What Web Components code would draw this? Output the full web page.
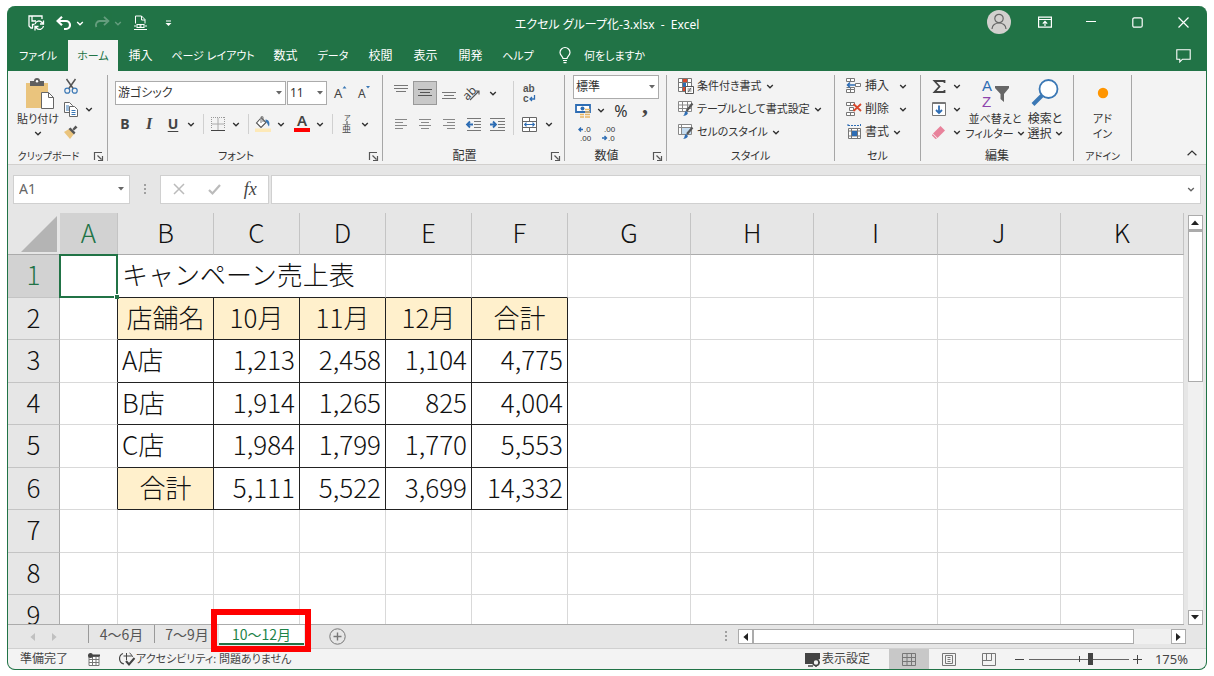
<!DOCTYPE html>
<html lang="ja">
<head>
<meta charset="utf-8">
<title>エクセル グループ化-3.xlsx - Excel</title>
<style>
  html, body { margin: 0; height: 100%; }
  body {
    box-sizing: border-box; padding: 6px 7px; background: #fff; color: #333;
    font: 12px/16px "Noto Sans", "Noto Sans CJK JP", sans-serif;
    font-feature-settings: "palt";
  }
</style>
</head>
<body>
<excel-window></excel-window>
<script>
const ICONS = {
  chevron: [8, 5, '<path d="M1.2 1l2.8 2.7L6.8 1" fill="none" stroke="currentColor" stroke-width="1.4"/>'],
  up: [10, 6, '<path d="M.6 5.3L5 1l4.4 4.3" fill="none" stroke="currentColor" stroke-width="1.2"/>'],
  triDown: [8, 5, '<path d="M0 0h8L4 4.6z" fill="currentColor"/>'],
  triSmall: [6, 4, '<path d="M0 0h6L3 3.600z" fill="currentColor"/>'],
  triUp: [8, 5, '<path d="M0 5h8L4 .4z" fill="currentColor"/>'],
  triLeft: [5, 8, '<path d="M5 0v8L.4 4z" fill="currentColor"/>'],
  triRight: [5, 8, '<path d="M0 0v8l4.6-4z" fill="currentColor"/>'],
  dots: [3, 11, '<path d="M0 0h2v2H0zM0 4h2v2H0zM0 8h2v2H0z" fill="#a0a0a0"/>'],
  save: [17, 16, '<g fill="none" stroke="#fff" stroke-width="1.3"><path d="M5 13H3L1 11V1h13v3M4 1v5h4M4.500 13V9.500h2"/><path d="M7 9a4 4 0 0 1 7-1.500l1 1.500M15.500 5.500v3.500H12M15.500 11a4 4 0 0 1-7 2L7.200 11.500M7 15.500v-4h3.500"/></g>'],
  undo: [16, 14, '<path d="M6 .8L1.600 5 6 9.200M2 5h8a4 4 0 0 1 0 8H8" fill="none" stroke="currentColor" stroke-width="2.200"/>'],
  redo: [16, 14, '<path d="M10 .8L14.400 5 10 9.200M14 5H6a4 4 0 0 0-3.600 6" fill="none" stroke="currentColor" stroke-width="1.800"/>'],
  preview: [13, 16, '<g fill="none" stroke="#fff"><path d="M1.500 8.500V1h6l3.500 3.500v4M7.500 1v4H11M0 14.500h13"/><path d="M3 9.500h7v3H3zM0 11h2M11 11h2" stroke-width="1.100"/><path d="M5.500 11h2" stroke-width="1.500"/></g>'],
  more: [7, 7, '<path d="M1 1h5" stroke="#fff"/><path d="M.500 3h6L3.500 6z" fill="#fff"/>'],
  person: [24, 24, '<circle cx="12" cy="12" r="12" fill="#d2d0ce"/><g fill="none" stroke="#666" stroke-width="1.200"><circle cx="12" cy="8.500" r="4.200"/><path d="M5 19c0-8 14-8 14 0"/></g>'],
  ribbonOpt: [14, 12, '<g fill="none" stroke="#fff" stroke-width="1.200"><path d="M.6 1.100h12.800v10H.6zM.6 3.500h12.800M7 10V5.500M4.800 7.600L7 5.400l2.200 2.200"/></g>'],
  min: [10, 10, '<path d="M0 4.500h10" stroke="#fff"/>'],
  max: [11, 11, '<rect x=".8" y=".8" width="9.400" height="9.400" rx="1.500" fill="none" stroke="#fff" stroke-width="1.200"/>'],
  close: [11, 11, '<path d="M.5.5l10 10M10.500.5l-10 10" stroke="#fff" stroke-width="1.200"/>'],
  bulb: [12, 17, '<g fill="none" stroke="#fff" stroke-width="1.200"><path d="M4 11.500C4 9.500 1 8.500 1 5.500a5 5 0 0 1 10 0c0 3-3 4-3 6zM4 13.500h4M4.500 15.700h3"/></g>'],
  comment: [15, 14, '<path d="M.8.800h13.400v9.400H6.500L3.800 13v-2.800H.8z" fill="none" stroke="#fff" stroke-width="1.100"/>'],
  paste: [24, 31, '<path d="M0 5h22v25H0z" fill="#eac47d"/><path d="M4 3h4a3 3 0 0 1 6 0h4v5H4z" fill="#5f5f5f"/><circle cx="11" cy="3.200" r="1.200" fill="#fff"/><path d="M15.500 14.500h7l5 5v11h-12z" fill="#fff" stroke="#666"/><path d="M22.500 14.500v5h5" fill="none" stroke="#666"/>'],
  cut: [14, 15, '<path d="M2.500 0l7 10M11.500 0l-7 10" stroke="#555" stroke-width="1.500"/><g fill="none" stroke="#3b78b5" stroke-width="1.200"><circle cx="3.300" cy="11.700" r="2.500"/><circle cx="10.700" cy="11.700" r="2.500"/></g>'],
  copy: [15, 15, '<g fill="#fff" stroke="#666"><path d="M.5.5h5l3 3v7h-8z"/><path d="M5.500 4.500h5l3 3v7h-8z"/></g><path d="M2 4h3M2 6h3M2 8h3M7.500 8.500h4M7.500 10.500h4M7.500 12.500h4" stroke="#3b78b5"/>'],
  brush: [14, 14, '<path d="M0 7l5-3 5 5-4 5z" fill="#eac47d"/><path d="M4.500 4l2-1.500 5 5-1.500 2zM8.500 4L11.500.500 13.500 2.500 10 5.500z" fill="#555"/>'],
  grow: [14, 16, '<text x="0" y="13" font-size="13" fill="#444">A</text><path d="M8.500 3.500l2-2.500 2 2.500" fill="#3b78b5"/>'],
  shrink: [14, 16, '<text x="0" y="13" font-size="12" fill="#444">A</text><path d="M8 1h4l-2 2.500z" fill="#3b78b5"/>'],
  borders: [14, 14, '<path d="M.5 0v12M13.500 0v12M0 .5h14" stroke="#999" stroke-dasharray="1 1"/><path d="M7 1v12M1 7h12" stroke="#aaa"/><path d="M0 13.500h14" stroke="#444"/>'],
  fill: [16, 16, '<path d="M5.500 2.500L1.500 7l4.500 4.500 5-5L6 1.500" fill="#fff" stroke="#555" stroke-width="1.100"/><path d="M6 7V.8h2V6" fill="none" stroke="#777"/><path d="M10.500 3.500c4 0 4.500 4 3.500 7-1.500-1.500-1.500-4-3.500-5z" fill="#3b78b5"/><path d="M0 12.500h16v3.500H0z" fill="#fde9b8"/>'],
  fontColor: [16, 18, '<text x="3" y="11" font-size="15" font-weight="600" fill="#444">A</text><path d="M0 13h16v4H0z" fill="#f00"/>'],
  furigana: [12, 16, '<text x="3" y="4" font-size="7" fill="#444">ア</text><text x="1" y="16" font-size="9" fill="#444">亜</text><path d="M6 5v3" stroke="#444"/>'],
  alTop: [16, 16, '<path d="M1 3.500h14M3 6.500h10M1 .5h14" stroke="#777"/>'],
  alMid: [14, 16, '<path d="M0 4.500h14M2 7.500h10M0 10.500h14" stroke="#555"/>'],
  alBot: [14, 16, '<path d="M0 7.500h14M2 10.500h10M0 13.500h14" stroke="#777"/>'],
  orient: [16, 16, '<text x="-2" y="12" font-size="12" fill="#444" transform="rotate(-45 5 9)">ab</text><path d="M5 15l9-9M10.500 6H14v3.500" fill="none" stroke="#555" stroke-width="1.100"/>'],
  left: [12, 11, '<path d="M0 .5h12M0 3.500h8M0 6.500h12M0 9.500h8" stroke="#888"/>'],
  center: [12, 11, '<path d="M0 .5h12M2 3.500h8M0 6.500h12M2 9.500h8" stroke="#888"/>'],
  right: [12, 11, '<path d="M0 .5h12M4 3.500h8M0 6.500h12M4 9.500h8" stroke="#888"/>'],
  outdent: [15, 13, '<path d="M1 .5h14M8 3.500h7M8 6.500h7M8 9.500h7M1 12.500h14" stroke="#777"/><path d="M7 6.500H1.500M4 3.500l-3 3 3 3" fill="none" stroke="#2e6db4" stroke-width="1.800"/>'],
  indent: [15, 13, '<path d="M0 .5h15M8 3.500h7M8 6.500h7M8 9.500h7M0 12.500h15" stroke="#777"/><path d="M0 6.500h5.500M3 3.500l3 3-3 3" fill="none" stroke="#2e6db4" stroke-width="1.800"/>'],
  wrap: [14, 17, '<g font-family="Liberation Sans" font-size="10" font-weight="700" fill="#555"><text x="1" y="7">ab</text><text x="1" y="17">c</text></g><path d="M12.500 10v4H8M10 12l-2 2 2 2" fill="none" stroke="#2e6db4" stroke-width="1.300"/>'],
  merge: [15, 15, '<path d="M.5.5h14v14H.5zM.5 4.500h14M.5 10.500h14M7.500 0v4.500M7.500 10.500v4" fill="#fff" stroke="#666"/><path d="M2.500 7.500h10M4.500 5.700L2.700 7.500l1.800 1.800M10.500 5.700l1.800 1.800-1.800 1.800" fill="none" stroke="#2e6db4" stroke-width="1.200"/>'],
  money: [16, 16, '<path d="M1 2h14v7H1z" fill="#fff" stroke="#2e6db4" stroke-width="1.800"/><circle cx="7.500" cy="5.500" r="2" fill="#2e6db4"/><path d="M10 6.500h5M10 9h5M10 11.500h5M10 14h5M5 11.500h4M5 14h4" stroke="#e9b765" stroke-width="1.600"/>'],
  incDec: [14, 15, '<g font-family="Liberation Sans" font-size="8" fill="#333"><text x="6" y="6">.0</text><text x="2" y="15">.00</text></g><path d="M5 3.500H1M3 1.500l-2 2 2 2" fill="none" stroke="#2e6db4" stroke-width="1.400"/>'],
  decDec: [14, 15, '<g font-family="Liberation Sans" font-size="8" fill="#333"><text x="2" y="6">.00</text><text x="6" y="15">.0</text></g><path d="M0 12h4M2.500 10l2 2-2 2" fill="none" stroke="#2e6db4" stroke-width="1.400"/>'],
  condFmt: [16, 16, '<path d="M.5.5h13v13H.5zM0 4.500h13M0 9.500h13M4.500 0v13M9.500 0v13" fill="#fff" stroke="#777"/><path d="M5 1h4v3H5zM5 9h3v4H5z" fill="#d9472b"/><path d="M5 5h3v4H5z" fill="#2e6db4"/><path d="M7.500 8.500h8v7h-8z" fill="#fff" stroke="#555"/><path d="M9.500 11h4M9.500 13h4M13 9.800l-3 4.500" stroke="#555" stroke-width=".8"/>'],
  tableFmt: [16, 16, '<path d="M.5.5h13v10H.5zM0 4h13M0 7.500h13M4.500 0v11M9.500 0v11" fill="#fff" stroke="#888"/><path d="M14.500 2.500L8.500 10" stroke="#555" stroke-width="2.200"/><path d="M5 14.500c2 0 1-3 3-4.500l2 2c-1 2.500-3 3-5 2.500z" fill="#2e6db4"/>'],
  cellStyle: [16, 16, '<path d="M.5.5h13v10H.5zM0 3.500h13M3.500 0v11" fill="#fff" stroke="#888"/><path d="M4 4h9v6H4z" fill="#c5dcf0"/><path d="M14.500 3.500L9 10" stroke="#555" stroke-width="2.200"/><path d="M5 14.500c2 0 1-3 3-4.500l2 2c-1 2.500-3 3-5 2.500z" fill="#2e6db4"/>'],
  insert: [16, 16, '<path d="M.5.500h8v3h-8zM4.500.500v3M.5 11.500h8v3h-8zM.5 9.500h8v2M4.500 9.500v5M9.500 5.500h5v3h-5z" fill="#fff" stroke="#777"/><path d="M9 7H1.500M4 4.500L1.500 7 4 9.500" fill="none" stroke="#2e6db4" stroke-width="1.500"/>'],
  del: [16, 16, '<path d="M.5 1.500h8v3h-8zM4.500 1.500v3M.5 11.500h8v3h-8zM4.500 11v3.500M3.500 6.500h4v3h-4z" fill="#fff" stroke="#777"/><path d="M7.500 3l7.500 7M15 3l-7.500 7" stroke="#d9472b" stroke-width="1.800"/>'],
  format: [15, 16, '<path d="M1.500 4.500h12v10h-12zM4.500 4v11M10.500 4v11M1 7h12M1 12h12" fill="#fff" stroke="#777"/><path d="M5 7h5v5H5z" fill="#2e6db4"/><path d="M1 1.500h13M1 0v3M13.500 0v3" stroke="#2e6db4" stroke-dasharray="2 1"/>'],
  sum: [13, 13, '<path d="M11.500 3V1H1.500l5 5.500-5 5.500h10v-2" fill="none" stroke="#444" stroke-width="1.800"/>'],
  fillDown: [14, 14, '<path d="M.5.500h13v13H.5z" fill="#fff" stroke="#777"/><path d="M1 1.500h12" stroke="#777"/><path d="M7 3.500v7M4 8l3 3 3-3" fill="none" stroke="#2e6db4" stroke-width="1.800"/>'],
  eraser: [14, 13, '<path d="M8.500 0L13 4.500 5.500 12 1 7.500z" fill="#e8829b"/><path d="M.5 8L5 12.500l-1.500.5L0 9.500z" fill="#e8829b"/>'],
  sort: [28, 27, '<g font-family="Liberation Sans" font-size="15"><text x="1" y="11" fill="#2e6db4">A</text><text x="1" y="27" fill="#8e44ad">Z</text></g><path d="M14 6h14v2l-5 6v8l-3.500-3v-5L14 8z" fill="#666"/>'],
  search: [28, 28, '<circle cx="17.500" cy="10" r="9" fill="#fff" stroke="#3b78b5" stroke-width="1.800"/><path d="M11 16.500L2 25.500" stroke="#3b78b5" stroke-width="4"/>'],
  addin: [12, 12, '<circle cx="6" cy="6" r="5.200" fill="#ff9500"/>'],
  launch: [9, 9, '<path d="M.5 8V.500H8M3.500 3.500l4 4M8.500 4v4.500H4" fill="none" stroke="#555" stroke-width="1.200"/>'],
  cancel: [12, 12, '<path d="M1 1l10 10M11 1L1 11" stroke="#bbb" stroke-width="1.500"/>'],
  check: [13, 11, '<path d="M1 6l3.500 3.500L12 1" fill="none" stroke="#bbb" stroke-width="2.200"/>'],
  corner: [36, 36, '<path d="M36 0v36H0z" fill="#b4b4b4"/>'],
  plus: [17, 17, '<g fill="none" stroke="#777"><circle cx="8.500" cy="8.500" r="7.700"/><path d="M8.500 4.500v8M4.500 8.500h8" stroke-width="1.400"/></g>'],
  macro: [12, 13, '<path d="M1 3.500h10v9H1z" fill="#fff" stroke="#777"/><path d="M1 3.500h10M1 6.500h10M1 9.500h10M4.500 4v8M8 4v8" stroke="#777"/><circle cx="2.500" cy="2.500" r="2.500" fill="#444"/><path d="M5 1.500h7v2H5z" fill="#444"/>'],
  access: [16, 14, '<path d="M4 1.500a5.500 5.500 0 0 0 1 10.500" fill="none" stroke="#444" stroke-width="1.200"/><path d="M7.500 1v7M4.500 4h8M10.500 1a6 6 0 0 1 3 4" fill="none" stroke="#444"/><path d="M7 9l3 3.500L15.500 6" fill="none" stroke="#444" stroke-width="2"/>'],
  display: [16, 15, '<path d="M0 1h15v6l-3 1-3 4H0z" fill="#444"/><path d="M3 14h5" stroke="#444" stroke-width="1.500"/><circle cx="11" cy="10.500" r="3" fill="#f3f3f3" stroke="#444" stroke-width="1.600"/><path d="M11 6v2M11 13v2M7 10.500h1.500M13.500 10.500H15" stroke="#444" stroke-width="1.500"/>'],
  vNormal: [14, 13, '<path d="M.5.500h13v12H.5zM.5 4.500h13M.5 8.500h13M5 .5v12M9.500.5v12" fill="none" stroke="#777"/>'],
  vLayout: [14, 13, '<path d="M.5.500h13v12H.5zM3.500 2.500h7v8h-7zM5.500 4.500h3M5.500 6.500h3M5.500 8.500h3" fill="none" stroke="#777"/>'],
  vBreak: [14, 13, '<path d="M.5.500h13v12H.5zM4.500.5v7M9.500.5v7M.5 7.500h9" fill="none" stroke="#777"/>'],
  minus: [9, 9, '<path d="M0 4.500h9" stroke="#444"/>'],
  add: [9, 9, '<path d="M0 4.500h9M4.500 0v9" stroke="#444"/>']
};

const BUTTON = `button{font:inherit;color:inherit;font-feature-settings:inherit;background:none;border:0;margin:0;padding:0;display:flex;align-items:center;justify-content:center}`;

function define(name, html) {
  const tpl = document.createElement('template');
  customElements.define(name, class extends HTMLElement {
    connectedCallback() {
      if (this.shadowRoot) return;
      tpl.innerHTML = typeof html === 'function' ? html(this) : html;
      this.attachShadow({ mode: 'open' }).append(tpl.content.cloneNode(true));
    }
  });
}

define('ui-icon', el => {
  const [w, h, body] = ICONS[el.getAttribute('name')];
  return `<style>:host{display:inline-flex;flex:none}svg{display:block;overflow:visible}</style>
    <svg width="${w}" height="${h}" viewBox="0 0 ${w} ${h}" aria-hidden="true">${body}</svg>`;
});

/* Icon with optional text (slot) and drop-down chevron. */
define('tool-button', el => `
  <style>
    :host{display:inline-flex;flex:none}
    ${BUTTON}
    button{height:22px;white-space:nowrap}
    .i{width:var(--icon-box,20px);display:flex;justify-content:center;align-items:center}
    .c{width:16px;display:flex;justify-content:center}
    :host([selected]) button{height:24px;background:#c8c8c8;box-shadow:inset 0 0 0 1px #999}
  </style>
  <button type="button" aria-label="${el.getAttribute('label') || el.textContent.trim()}">
    ${el.hasAttribute('icon') ? `<span class="i"><ui-icon name="${el.getAttribute('icon')}"></ui-icon></span>` : ''}<slot></slot>${el.hasAttribute('caret') ? '<span class="c"><ui-icon name="chevron"></ui-icon></span>' : ''}
  </button>`);

/* Tall ribbon button: icon above one or two text lines. */
define('big-button', el => `
  <style>
    :host{display:block;flex:none}
    ${BUTTON}
    button{flex-direction:column;justify-content:flex-start;width:100%;white-space:nowrap;line-height:15px}
    .i{height:36px;display:flex;align-items:center}
    .l{display:flex;align-items:center;gap:3px;height:15px}
  </style>
  <button type="button" aria-label="${el.getAttribute('label')}">
    <span class="i"><ui-icon name="${el.getAttribute('icon')}"></ui-icon></span>
    <slot></slot>
    <span class="l"><slot name="second"></slot>${el.hasAttribute('caret') ? '<ui-icon name="chevron"></ui-icon>' : ''}</span>
  </button>`);

define('combo-box', el => `
  <style>
    :host{display:block;position:relative;color:#333}
    select{appearance:none;box-sizing:border-box;width:100%;height:24px;border:1px solid #ababab;border-radius:0;background:#fff;
      font:inherit;font-feature-settings:inherit;color:inherit;padding:0 0 0 2px;margin:0;display:block}
    ui-icon{position:absolute;right:4px;top:10px;color:#666;pointer-events:none}
  </style>
  <select aria-label="${el.getAttribute('label')}"><option>${el.getAttribute('value')}</option></select>
  <ui-icon name="triSmall"></ui-icon>`);

define('title-bar', `
  <style>
    :host{display:grid;grid-template-columns:1fr auto 1fr;align-items:center;height:34px;color:#fff}
    ${BUTTON}
    .q{display:flex;align-items:center;padding-left:20px}
    .q button{width:16px;height:22px}
    .q .s{width:17px;margin-right:11px}
    .q .u{margin-right:4px}.q .n{width:8px;margin-right:10px}
    .dim{opacity:.3}
    .w{display:flex;align-items:center;justify-content:flex-end}
    .w button{width:46px;height:32px;padding-bottom:2px}
    h1{font:inherit;font-size:12px;margin:0;padding-top:3px;white-space:pre}
  </style>
  <div class="q">
    <button class="s" aria-label="保存"><ui-icon name="save"></ui-icon></button>
    <button class="u" aria-label="元に戻す"><ui-icon name="undo"></ui-icon></button>
    <button class="n" aria-label="元に戻す履歴"><ui-icon name="chevron"></ui-icon></button>
    <button class="u dim" aria-label="やり直し"><ui-icon name="redo"></ui-icon></button>
    <button class="n dim" aria-label="やり直し履歴"><ui-icon name="chevron"></ui-icon></button>
    <button class="s" aria-label="印刷プレビュー"><ui-icon name="preview"></ui-icon></button>
    <button aria-label="クイック アクセス ツール バーのカスタマイズ"><ui-icon name="more"></ui-icon></button>
  </div>
  <h1>エクセル グループ化-3.xlsx  -  Excel</h1>
  <div class="w">
    <button aria-label="アカウント"><ui-icon name="person"></ui-icon></button>
    <button aria-label="リボンの表示オプション"><ui-icon name="ribbonOpt"></ui-icon></button>
    <button aria-label="最小化"><ui-icon name="min"></ui-icon></button>
    <button aria-label="最大化"><ui-icon name="max"></ui-icon></button>
    <button aria-label="閉じる"><ui-icon name="close"></ui-icon></button>
  </div>`);

define('ribbon-tabs', `
  <style>
    :host{display:flex;height:31px;color:#fff}
    ${BUTTON}
    nav{display:flex}
    nav button{width:45px;white-space:nowrap}
    nav .home{width:50px;background:#f3f3f3;color:#217346}
    nav .file{width:60px}
    nav .wide{width:100px}
    nav .mid{width:50px}
    .k{font-size:11px}
    .home{font-size:11px}
    .tell{gap:13px;margin-left:16px}
    .cm{margin-left:auto;width:46px}
  </style>
  <nav aria-label="リボン タブ">
    <button class="file k">ファイル</button><button class="home">ホーム</button><button>挿入</button>
    <button class="wide k">ページ レイアウト</button><button>数式</button><button class="mid k">データ</button>
    <button>校閲</button><button>表示</button><button>開発</button><button class="mid k">ヘルプ</button>
  </nav>
  <button class="tell k"><ui-icon name="bulb"></ui-icon>何をしますか</button>
  <button class="cm" aria-label="コメント"><ui-icon name="comment"></ui-icon></button>`);

define('ribbon-group', el => `
  <style>
    :host{display:flex;flex-direction:column;flex:none;box-sizing:border-box;height:88px;padding-right:1px;
      background:linear-gradient(#a6a6a6,#a6a6a6) right top/1px 86px no-repeat}
    .b{flex:1;display:flex}
    .f{display:flex;align-items:center;height:14px;font-size:var(--label-size,12px);line-height:14px}
    .f span{flex:1;text-align:center;white-space:nowrap}
    ${BUTTON}
    button{width:18px;height:14px}
  </style>
  <div class="b"><slot></slot></div>
  <div class="f"><span>${el.getAttribute('label')}</span>${el.hasAttribute('launcher') ? `<button aria-label="${el.getAttribute('label')}の設定"><ui-icon name="launch"></ui-icon></button>` : ''}</div>`);

define('ribbon-bar', `
  <style>
    :host{display:flex;height:94px;padding-top:4px;box-sizing:border-box;background:#f3f3f3;border-bottom:1px solid #d2d0ce;flex:none}
    .col{display:flex;flex-direction:column}
    .row{display:flex;align-items:center;height:24px}
    .rows{gap:7px;padding-top:6px}
    .sep{width:1px;height:20px;background:#d0d0d0;margin:0 4px}
    .tall{height:54px;margin:6px 3px 0 4px}
    .clip{width:100px;--label-size:10px}
    .font{width:275px;--label-size:11px}.align{width:182px}.num{width:102px}
    .style{width:168px;--label-size:11px}.cell{width:86px;--label-size:11px}.edit{width:153px}.add{width:58px;--label-size:10px}
    .font .col{padding-left:7px}
    .name{width:171px;margin-right:1px}.size{width:40px;margin-right:2px}
    .bius{gap:4px}
    .w24{--icon-box:24px}
    .align .a{padding-left:6px}
    .paste{width:44px;margin-left:8px;font-size:11px}
    .small{padding-left:1px}
    .small tool-button,.list tool-button{height:23px}
    .num .col{padding-left:8px}
    .num .row{height:23px}
    .num .w24{padding-left:0}
    .k{font-size:11px}
    .list{padding-left:11px}
    .list tool-button{--icon-box:16px}
    .list span{padding-left:3px}
    .cell .wide span{padding-right:6px}
    b,i,u{font-size:14px;color:#444;font-weight:700;width:20px;text-align:center}
    i{font-family:"Liberation Serif",serif;font-size:16px}
    u{text-underline-offset:2px}
    .pct{font-size:16px;width:24px;text-align:center}
    .comma{font-family:"Liberation Serif",serif;font-size:24px;width:24px;padding-bottom:12px}
    .sort{width:58px;margin-left:1px;font-size:11px}.find{width:42px}
    .in{padding-left:8px}
    .addin{width:100%;font-size:11px}
    .up{margin-left:auto;align-self:flex-end;--icon-box:28px}
  </style>
  <ribbon-group class="clip" label="クリップボード" launcher>
    <big-button class="paste" icon="paste" label="貼り付け" caret>貼り付け</big-button>
    <div class="col small">
      <tool-button icon="cut" label="切り取り"></tool-button>
      <tool-button icon="copy" label="コピー" caret></tool-button>
      <tool-button icon="brush" label="書式のコピー"></tool-button>
    </div>
  </ribbon-group>
  <ribbon-group class="font" label="フォント" launcher>
    <div class="col rows">
      <div class="row"><combo-box class="name" label="フォント" value="游ゴシック"></combo-box><combo-box class="size" label="フォント サイズ" value="11"></combo-box>
        <tool-button class="w24" icon="grow" label="フォント サイズの拡大"></tool-button><tool-button class="w24" icon="shrink" label="フォント サイズの縮小"></tool-button></div>
      <div class="row">
        <div class="row bius"><tool-button label="太字"><b>B</b></tool-button><tool-button label="斜体"><i>I</i></tool-button><tool-button label="下線" caret><u>U</u></tool-button></div>
        <span class="sep"></span><tool-button icon="borders" label="罫線" caret></tool-button>
        <span class="sep"></span><tool-button icon="fill" label="塗りつぶしの色" caret></tool-button>
        <tool-button style="margin-left:3px" icon="fontColor" label="フォントの色" caret></tool-button>
        <span class="sep"></span><tool-button icon="furigana" label="ふりがな" caret></tool-button>
      </div>
    </div>
  </ribbon-group>
  <ribbon-group class="align" label="配置" launcher>
    <div class="col rows a w24">
      <div class="row"><tool-button icon="alTop" label="上揃え"></tool-button><tool-button icon="alMid" label="上下中央揃え" selected></tool-button><tool-button icon="alBot" label="下揃え"></tool-button><tool-button icon="orient" label="方向" caret></tool-button></div>
      <div class="row"><tool-button icon="left" label="左揃え"></tool-button><tool-button icon="center" label="中央揃え"></tool-button><tool-button icon="right" label="右揃え"></tool-button><tool-button icon="outdent" label="インデントを減らす"></tool-button><tool-button icon="indent" label="インデントを増やす"></tool-button></div>
    </div>
    <span class="sep tall"></span>
    <div class="col rows w24">
      <div class="row"><tool-button icon="wrap" label="折り返して全体を表示する"></tool-button></div>
      <div class="row"><tool-button icon="merge" label="セルを結合して中央揃え" caret></tool-button></div>
    </div>
  </ribbon-group>
  <ribbon-group class="num" label="数値" launcher>
    <div class="col">
      <combo-box style="width:86px" label="表示形式" value="標準"></combo-box>
      <div class="row"><tool-button icon="money" label="通貨表示形式" caret></tool-button><tool-button label="パーセント スタイル"><span class="pct">%</span></tool-button><tool-button label="桁区切りスタイル"><b class="comma">,</b></tool-button></div>
      <div class="row w24"><tool-button icon="incDec" label="小数点以下の表示桁数を増やす"></tool-button><tool-button icon="decDec" label="小数点以下の表示桁数を減らす"></tool-button></div>
    </div>
  </ribbon-group>
  <ribbon-group class="style" label="スタイル">
    <div class="col list k">
      <tool-button icon="condFmt" caret><span>条件付き書式</span></tool-button>
      <tool-button icon="tableFmt" caret><span>テーブルとして書式設定</span></tool-button>
      <tool-button icon="cellStyle" caret><span>セルのスタイル</span></tool-button>
    </div>
  </ribbon-group>
  <ribbon-group class="cell" label="セル">
    <div class="col list">
      <tool-button class="wide" icon="insert" caret><span>挿入</span></tool-button>
      <tool-button class="wide" icon="del" caret><span>削除</span></tool-button>
      <tool-button icon="format" caret><span>書式</span></tool-button>
    </div>
  </ribbon-group>
  <ribbon-group class="edit" label="編集">
    <div class="col small in">
      <tool-button icon="sum" label="オート SUM" caret></tool-button>
      <tool-button icon="fillDown" label="フィル" caret></tool-button>
      <tool-button icon="eraser" label="クリア" caret></tool-button>
    </div>
    <big-button class="sort" icon="sort" label="並べ替えとフィルター" caret>並べ替えと<span slot="second">フィルター</span></big-button>
    <big-button class="find" icon="search" label="検索と選択" caret>検索と<span slot="second">選択</span></big-button>
  </ribbon-group>
  <ribbon-group class="add" label="アドイン">
    <big-button class="addin" icon="addin" label="アドイン">アド<span slot="second">イン</span></big-button>
  </ribbon-group>
  <tool-button class="up" icon="up" label="リボンを折りたたむ"></tool-button>`);

define('formula-bar', `
  <style>
    :host{display:flex;align-items:center;height:48px;box-sizing:border-box;padding:0 5px;background:#e6e6e6;color:#666;flex:none}
    ${BUTTON}
    input{font:inherit;font-size:14px;color:inherit;border:0;background:none;padding:0 5px;margin:0;min-width:0;flex:1;outline:0}
    .box{display:flex;align-items:center;box-sizing:border-box;height:29px;background:#fff;border:1px solid #d0d0d0;padding-right:5px}
    .n{width:117px}
    .d{width:30px;display:flex;justify-content:center}
    .f{width:109px;padding:0;margin-right:2px}
    .f button{flex:1}
    .f i{font:italic 18px "Liberation Serif",serif;color:#444}
    .in{flex:1}
  </style>
  <div class="box n"><input aria-label="名前ボックス" value="A1"><ui-icon name="triSmall"></ui-icon></div>
  <span class="d"><ui-icon name="dots"></ui-icon></span>
  <div class="box f"><button aria-label="キャンセル"><ui-icon name="cancel"></ui-icon></button><button aria-label="入力"><ui-icon name="check"></ui-icon></button><button aria-label="関数の挿入"><i>fx</i></button></div>
  <div class="box in"><input aria-label="数式バー"><ui-icon name="chevron"></ui-icon></div>`);

define('scroll-bar', el => {
  const v = el.hasAttribute('vertical');
  return `<style>
    :host{display:flex;flex-direction:${v ? 'column' : 'row'};background:#f0f0f0;color:#222}
    ${BUTTON}
    button,.t{box-sizing:border-box;border:1px solid #ababab;background:#fff;flex:none}
    button{width:15px;height:15px}
    .t{${v ? 'height:37%;width:15px;border-top-width:2px' : 'width:85%;height:15px'}}
    i{flex:1}
  </style>
  <button aria-label="戻る"><ui-icon name="${v ? 'triUp' : 'triLeft'}"></ui-icon></button><div class="t"></div><i></i>
  <button aria-label="進む"><ui-icon name="${v ? 'triDown' : 'triRight'}"></ui-icon></button>`;
});

const COLS = 'ABCDEFGHIJK'.split('');
const ROWS = [
  null,
  ['店舗名', '10月', '11月', '12月', '合計'],
  ['A店', '1,213', '2,458', '1,104', '4,775'],
  ['B店', '1,914', '1,265', '825', '4,004'],
  ['C店', '1,984', '1,799', '1,770', '5,553'],
  ['合計', '5,111', '5,522', '3,699', '14,332'],
  null, null, null
];
const sheetRow = (r, i) => {
  let cells = '';
  if (i === 0) cells = '<td class="sel"><span class="cur"></span></td><td class="title" colspan="3">キャンペーン売上表</td>' + '<td></td>'.repeat(7);
  else if (!r) cells = '<td></td>'.repeat(11);
  else cells = '<td class="edge"></td>' + r.map((t, c) => {
    const head = i === 1 || (i === 5 && c === 0);
    return `<td class="d ${head ? 'h' : c ? 'r' : ''}">${t}</td>`;
  }).join('') + '<td></td>'.repeat(5);
  return `<tr class="r${i}"><th scope="row" class="${i ? '' : 'on'}">${i + 1}</th>${cells}</tr>`;
};

define('sheet-grid', `
  <style>
    :host{display:flex;flex:1;min-height:0;background:#e6e6e6}
    .view{flex:1;min-width:0;overflow:hidden;border-bottom:1px solid #ababab;box-sizing:border-box}
    table{border-collapse:separate;border-spacing:0;table-layout:fixed;width:100%;
      font:300 26px/36px "Noto Sans CJK JP",sans-serif;font-feature-settings:normal;color:#111}
    .c0{width:52px}.cA{width:58px}.cB,.cF{width:96px}.cC,.cD,.cE{width:86px}
    th,td{box-sizing:border-box;padding:0 0 4px;border:0 solid #d9d9d9;border-width:0 1px 1px 0;white-space:nowrap;height:42px;background:#fff}
    tbody tr:nth-child(odd)>*{height:43px}
    th{font-weight:300;background:#e6e6e6;border-color:#c4c4c4;text-align:center}
    thead th{border-bottom-color:#ababab}
    tbody th{border-right-color:#ababab}
    thead th.k{border-right-color:#e6e6e6;position:relative}
    .k ui-icon{position:absolute;right:2px;bottom:2px}
    th.on{background:#d2d2d2;color:#217346}
    td.d{border-color:#222;padding:0 4px 4px}
    td.edge{border-right-color:#222}
    td.title{text-align:left;padding-left:4px;border-bottom-color:#222}
    .r0 td:nth-child(4),.r0 td:nth-child(5){border-bottom-color:#222}
    td.h{background:#fff0cc;text-align:center}
    td.r{text-align:right}
    td.sel{position:relative}
    .cur{position:absolute;left:-1px;top:-1px;right:-1px;bottom:-1px;border:2px solid #217346}
    .cur::after{content:"";position:absolute;right:-3px;bottom:-3px;width:4px;height:4px;background:#217346;border:1px solid #fff;border-width:1px 0 0 1px}
    .side{width:22px;flex:none;display:flex;justify-content:center;padding-top:2px}
    scroll-bar{flex:none}
  </style>
  <div class="view"><table>
    <colgroup><col class="c0">${COLS.map(c => `<col class="c${c}">`).join('')}</colgroup>
    <thead><tr><th class="k" aria-label="すべて選択"><ui-icon name="corner"></ui-icon></th>${COLS.map(c => `<th scope="col" class="${c === 'A' ? 'on' : ''}">${c}</th>`).join('')}</tr></thead>
    <tbody>${ROWS.map(sheetRow).join('')}</tbody>
  </table></div>
  <div class="side"><scroll-bar vertical></scroll-bar></div>`);

define('sheet-tabs', `
  <style>
    :host{display:flex;position:relative;height:23px;background:#e6e6e6;color:#555;font-size:14px;flex:none;
      font-family:"Noto Sans CJK JP",sans-serif}
    ${BUTTON}
    .nav{display:flex;align-items:center;gap:17px;padding-left:22px;width:58px;color:#c0c0c0}
    .t{width:66px;height:18px;border-left:1px solid #999;box-sizing:border-box;white-space:nowrap;line-height:16px}
    .last{width:65px}
    .a{position:relative;width:85px;height:20px;background:#fff;color:#1e8449;border-bottom:2px solid #217346;white-space:nowrap;line-height:16px}
    .mark{position:absolute;left:-8px;right:-7px;top:-16px;bottom:-9px;border:6px solid #f00}
    .plus{width:17px;margin-left:25px}
    .g{margin-left:auto;display:flex;align-items:center;padding-right:10px}
    scroll-bar{width:448px;align-self:flex-start;margin:4px 20px 0 0}
  </style>
  <div class="nav"><ui-icon name="triLeft"></ui-icon><ui-icon name="triRight"></ui-icon></div>
  <button class="t">4～6月</button><button class="t last">7～9月</button>
  <button class="a">10～12月<span class="mark"></span></button>
  <button class="plus" aria-label="新しいシート"><ui-icon name="plus"></ui-icon></button>
  <span class="g"><ui-icon name="dots"></ui-icon></span>
  <scroll-bar></scroll-bar>`);

define('status-bar', `
  <style>
    :host{display:flex;align-items:center;height:21px;background:#f3f3f3;border-top:1px solid #d0d0d0;box-sizing:border-box;flex:none;padding:0 18px 0 12px;white-space:nowrap;color:#444}
    ${BUTTON}
    .m{margin:0 19px 0 20px}
    .k{font-size:11px;gap:1px}
    .disp{margin-left:auto;gap:1px}
    .v{width:40px;height:20px}
    .v.on{background:#c8c8c8;margin-left:19px}
    .z{margin-left:5px;width:11px}
    input{appearance:none;width:100px;height:12px;margin:0 4px;padding:0;
      background:linear-gradient(#444,#444) center/1px 6px no-repeat,linear-gradient(#666,#666) center/100% 1px no-repeat}
    input::-webkit-slider-thumb{appearance:none;width:5px;height:12px;background:#444;border:0}
    output{width:34px;margin-left:12px;text-align:right;font-size:13px}
  </style>
  <span>準備完了</span>
  <button class="m" aria-label="マクロの記録"><ui-icon name="macro"></ui-icon></button>
  <button class="k"><ui-icon name="access"></ui-icon>アクセシビリティ: 問題ありません</button>
  <button class="disp"><ui-icon name="display"></ui-icon>表示設定</button>
  <button class="v on" aria-label="標準"><ui-icon name="vNormal"></ui-icon></button>
  <button class="v" aria-label="ページ レイアウト"><ui-icon name="vLayout"></ui-icon></button>
  <button class="v" aria-label="改ページ プレビュー"><ui-icon name="vBreak"></ui-icon></button>
  <button class="z" aria-label="縮小"><ui-icon name="minus"></ui-icon></button>
  <input type="range" min="0" max="100" value="62" aria-label="ズーム">
  <button aria-label="拡大"><ui-icon name="add"></ui-icon></button>
  <output>175%</output>`);

define('excel-window', `
  <style>
    :host{display:flex;flex-direction:column;height:100%;min-height:480px;box-sizing:border-box;border:1px solid #217346;border-top:0;border-radius:8px;overflow:hidden;background:#217346}
  </style>
  <title-bar></title-bar><ribbon-tabs></ribbon-tabs><ribbon-bar></ribbon-bar>
  <formula-bar></formula-bar><sheet-grid></sheet-grid><sheet-tabs></sheet-tabs><status-bar></status-bar>`);
</script>
</body>
</html>
